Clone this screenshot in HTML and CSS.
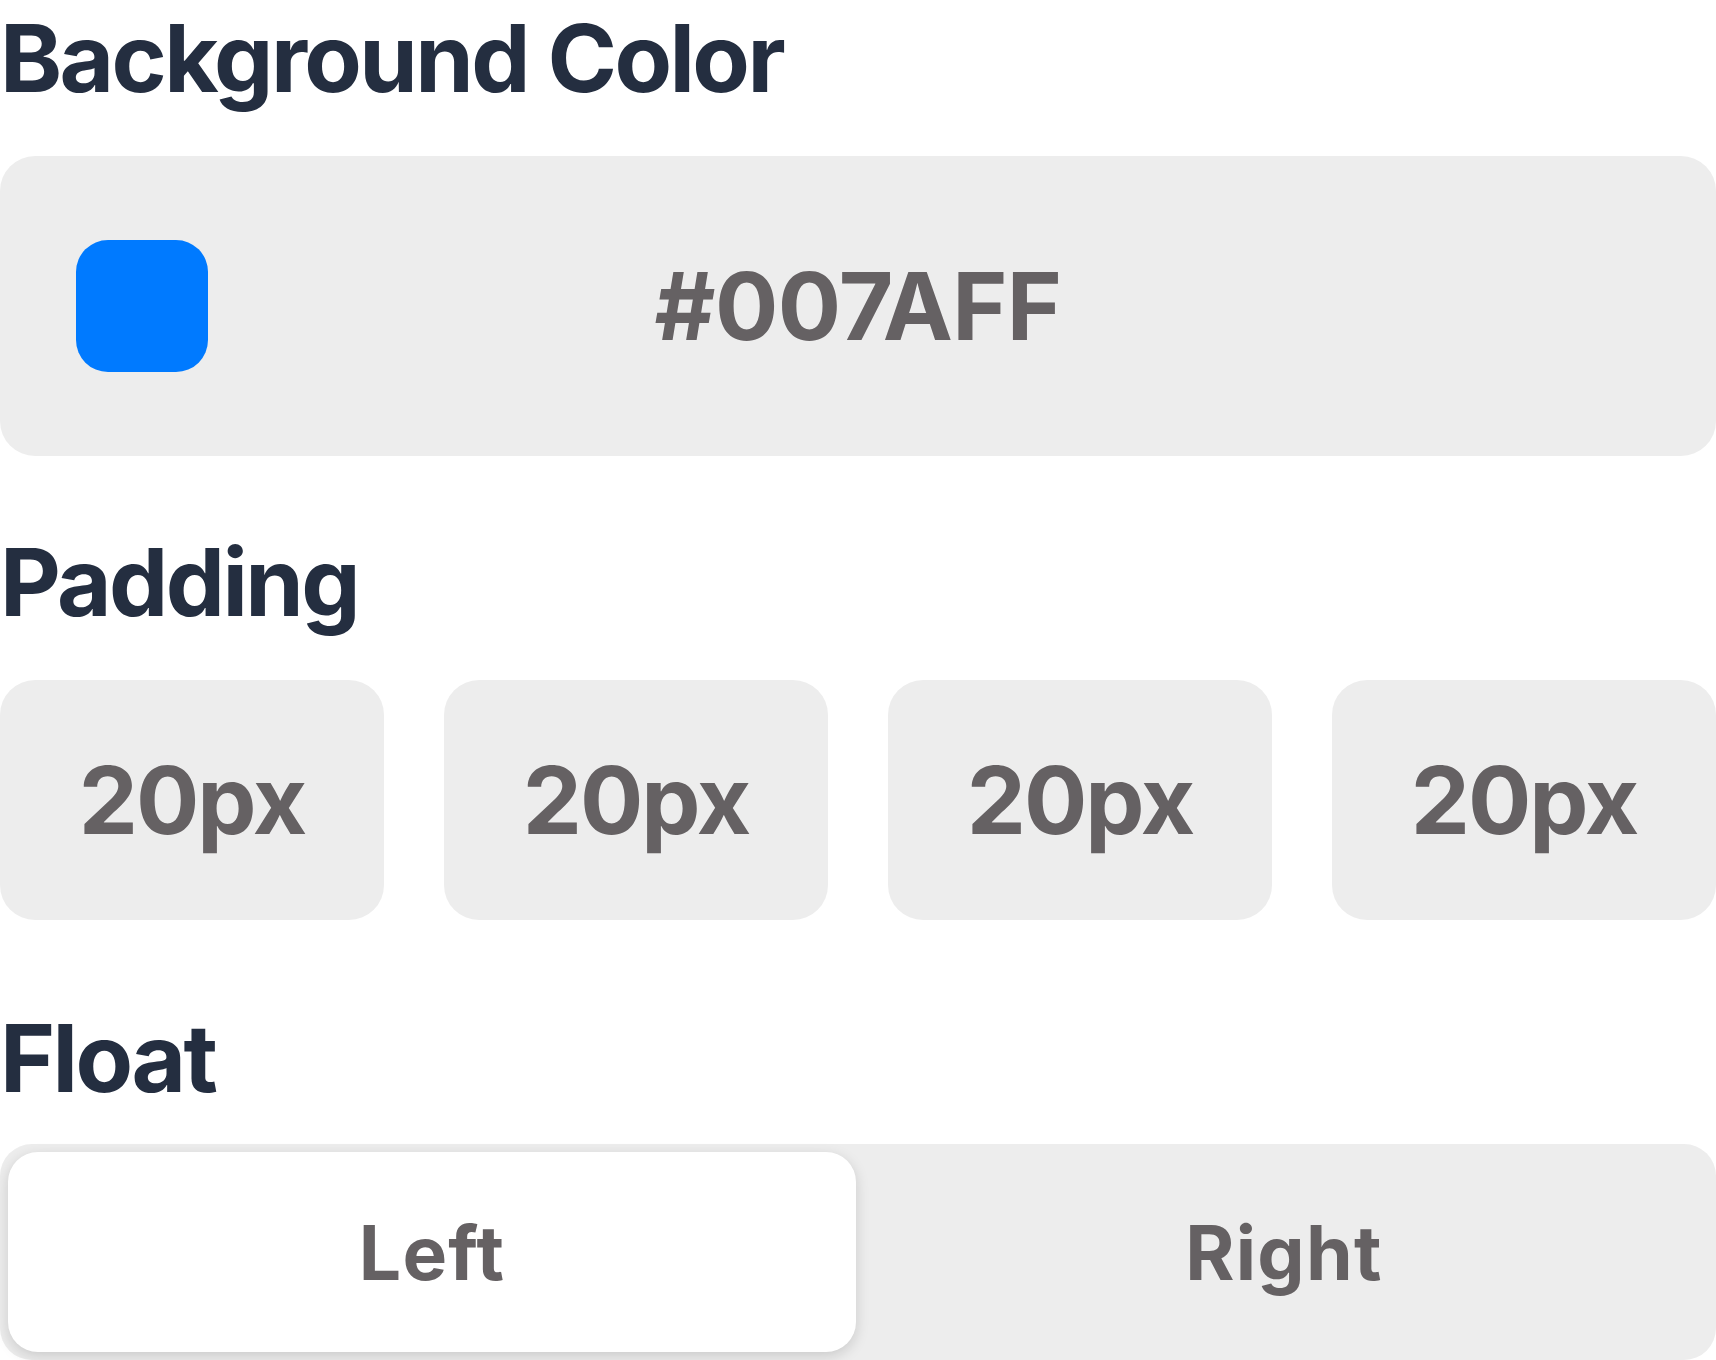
FILE: index.html
```html
<!DOCTYPE html>
<html>
<head>
<meta charset="utf-8">
<link rel="stylesheet" href="styles.css">
</head>
<body>
<div class="panel">
  <h2 class="title title-first">Background Color</h2>
  <div class="color-box">
    <div class="swatch"></div>
    <div class="hex">#007AFF</div>
    <div></div>
  </div>

  <h2 class="title title-padding">Padding</h2>
  <div class="padding-row">
    <div class="pad-box">20px</div>
    <div class="pad-box">20px</div>
    <div class="pad-box">20px</div>
    <div class="pad-box">20px</div>
  </div>

  <h2 class="title title-float">Float</h2>
  <div class="segmented">
    <div class="segment active">Left</div>
    <div class="segment">Right</div>
  </div>
</div>
</body>
</html>
```

FILE: styles.css
```css
html, body {
  margin: 0;
  padding: 0;
  background: #ffffff;
}

body {
  font-family: Inter, "Noto Sans", "Liberation Sans", sans-serif;
  overflow: hidden;
}

.panel {
  width: 1716px;
  display: flex;
  flex-direction: column;
}

.title {
  margin: 0;
  font-size: 94px;
  line-height: 116px;
  font-weight: 700;
  color: #242e40;
  letter-spacing: -2.6px;
}

.title-first {
  margin-bottom: 40px;
}

.title-padding {
  margin-top: 68px;
  margin-bottom: 40px;
}

.title-float {
  margin-top: 80px;
  margin-bottom: 28px;
}

.color-box {
  height: 300px;
  background: #ededed;
  border-radius: 35px;
  display: grid;
  grid-template-columns: 1fr auto 1fr;
  align-items: center;
  padding: 0 76px;
}

.swatch {
  width: 132px;
  height: 132px;
  border-radius: 32px;
  background: #007aff;
}

.hex {
  font-size: 94px;
  font-weight: 700;
  color: #656163;
  line-height: 1;
  letter-spacing: -0.6px;
}

.padding-row {
  display: grid;
  grid-template-columns: repeat(4, 1fr);
  gap: 60px;
}

.pad-box {
  height: 240px;
  background: #ededed;
  border-radius: 35px;
  display: flex;
  align-items: center;
  justify-content: center;
  font-size: 94px;
  font-weight: 700;
  color: #656163;
  letter-spacing: -2px;
}

.segmented {
  height: 216px;
  box-sizing: border-box;
  background: #ededed;
  border-radius: 32px;
  padding: 8px;
  display: flex;
  gap: 4px;
}

.segment {
  flex: 1;
  display: flex;
  align-items: center;
  justify-content: center;
  border-radius: 30px;
  font-size: 75px;
  font-weight: 700;
  color: #656163;
  letter-spacing: 1.3px;
}

.segment.active {
  background: #ffffff;
  box-shadow: 0 4px 14px rgba(0, 0, 0, 0.15);
}
```
